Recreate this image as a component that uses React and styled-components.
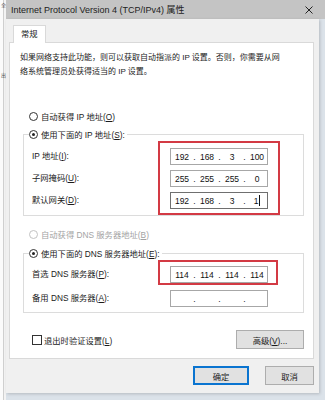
import React from 'react'
import styled, { createGlobalStyle } from 'styled-components'

const GlobalStyle = createGlobalStyle`
  html, body {
    margin: 0;
    padding: 0;
  }
  body {
    width: 325px;
    height: 400px;
    overflow: hidden;
    background: #dbe2e9;
    font-family: "Liberation Sans", "Noto Sans CJK SC", sans-serif;
    color: #1b1b1b;
    text-autospace: no-autospace;
  }
`

const Screen = styled.div`
  display: flex;
  width: 325px;
  height: 400px;
  overflow: hidden;
`

// window behind the dialog, only a sliver of it is visible
const BehindWindow = styled.div`
  width: 6px;
  flex-shrink: 0;
  display: flex;
  flex-direction: column;
  align-items: flex-end;
  background: linear-gradient(to right, #fbfbfb 0 3px, #cfcfcf 3px 4px, #f3f3f3 4px);
  font-size: 5px;
  color: #555;
`

const Glyph = styled.span`
  margin-top: ${p => p.top}px;
  line-height: 6px;
`

const Main = styled.div`
  flex: 1;
  display: flex;
  flex-direction: column;
`

const TitleBar = styled.div`
  height: 19px;
  flex-shrink: 0;
  display: flex;
  align-items: center;
  justify-content: space-between;
  padding: 0 12px 0 5px;
  background: #c4c4c4;
  font-size: 9px;
  color: #222;
`

const Window = styled.div`
  width: 313px;
  height: 374px;
  box-sizing: border-box;
  display: flex;
  flex-direction: column;
  padding: 6px 5px 0 3px;
  background: #f0f0f0;
  box-shadow: 1px 1px 3px rgba(0, 0, 0, 0.18);
  font-size: 8.3px;
`

const Tabs = styled.div`
  display: flex;
`

const Tab = styled.div`
  margin-left: 4px;
  height: 17px;
  line-height: 17px;
  padding: 0 7px;
  background: #fff;
  border: 1px solid #d9d9d9;
  border-bottom: none;
  position: relative;
  z-index: 1;
`

const Panel = styled.div`
  display: flex;
  flex-direction: column;
  margin-top: -1px;
  background: #fff;
  border: 1px solid #d9d9d9;
  padding: 8px 9px 9px 10px;
`

const Intro = styled.p`
  margin: 0;
  line-height: 14px;
  font-size: 8px;
  white-space: nowrap;
`

const OptionRow = styled.label`
  display: flex;
  align-items: center;
  gap: 3px;
  height: 14px;
  margin: ${p => p.mt}px 0 0 ${p => p.ml}px;
  color: ${p => (p.disabled ? '#a3a3a3' : '#1b1b1b')};
`

const Radio = styled.span`
  width: 7px;
  height: 7px;
  border-radius: 50%;
  border: 1px solid ${p => (p.disabled ? '#c2c2c2' : '#333')};
  background: #fff;
  display: flex;
  align-items: center;
  justify-content: center;

  &::after {
    content: '';
    width: 3px;
    height: 3px;
    border-radius: 50%;
    background: ${p => (p.checked ? '#222' : 'transparent')};
  }
`

const Group = styled.fieldset`
  margin: ${p => p.mt}px 0 0 3px;
  padding: 0 0 ${p => p.pb}px 0;
  border: 1px solid #dcdcdc;
  min-width: 0;
`

const Legend = styled.legend`
  margin-left: 5px;
  padding: 0 2px 0 0;
`

const GroupBody = styled.div`
  display: flex;
  padding-left: 8px;
`

const LabelCol = styled.div`
  flex: 1;
  display: flex;
  flex-direction: column;
  padding-top: ${p => p.pt}px;
  gap: ${p => p.gap}px;
`

const FieldLabel = styled.div`
  height: 17px;
  line-height: 17px;
`

const FieldCol = styled.div`
  display: flex;
  flex-direction: column;
  margin-right: ${p => p.mr}px;
`

const Highlight = styled.div`
  display: flex;
  flex-direction: column;
  gap: 5px;
  border: 2px solid #d33a44;
  padding: ${p => p.pad};
`

const LooseField = styled.div`
  padding-left: 12px;
  margin-top: 5px;
`

const IpBox = styled.div`
  width: 98px;
  height: 17px;
  box-sizing: border-box;
  display: flex;
  align-items: center;
  padding-left: 1px;
  border: 1px solid ${p => (p.focused ? '#6f6f6f' : '#a7a7a7')};
  background: #fff;
  font-family: "Liberation Sans", sans-serif;
  font-size: 8.5px;
  color: #111;
`

const Octet = styled.span`
  width: 20px;
  display: flex;
  justify-content: center;
  align-items: center;
`

const Dot = styled.span`
  width: 5px;
  text-align: center;
`

const Caret = styled.span`
  width: 1px;
  height: 11px;
  margin-left: 1px;
  background: #111;
`

const PanelFooter = styled.div`
  display: flex;
  align-items: center;
  justify-content: space-between;
  margin-top: 17px;
  padding-left: 12px;
`

const CheckRow = styled.label`
  display: flex;
  align-items: center;
  gap: 2px;
`

const Checkbox = styled.span`
  width: 8px;
  height: 8px;
  border: 1px solid #333;
  background: #fff;
`

const Button = styled.button`
  width: ${p => p.w}px;
  height: 19px;
  padding: 0;
  box-sizing: border-box;
  font-family: "Liberation Sans", "Noto Sans CJK SC", sans-serif;
  font-size: 8.3px;
  color: #1b1b1b;
  background: #e1e1e1;
  border: 1px solid ${p => (p.primary ? '#0a74d0' : '#adadad')};
  box-shadow: ${p => (p.primary ? 'inset 0 0 0 1px #0a74d0' : 'none')};
  text-autospace: no-autospace;
`

const DialogButtons = styled.div`
  display: flex;
  justify-content: flex-end;
  gap: 16px;
  padding-top: 7px;
`

const CloseIcon = () => (
  <svg width="8" height="8" viewBox="0 0 8 8">
    <path d="M0.5 0.5L7.5 7.5M7.5 0.5L0.5 7.5" stroke="#222" strokeWidth="1" />
  </svg>
)

const IpField = ({ parts = ['', '', '', ''], caret, focused }) => (
  <IpBox focused={focused}>
    {parts.map((p, i) => (
      <React.Fragment key={i}>
        {i > 0 && <Dot>.</Dot>}
        <Octet>
          {p}
          {caret && i === 3 && <Caret />}
        </Octet>
      </React.Fragment>
    ))}
  </IpBox>
)

const Option = ({ checked, disabled, mt = 0, ml = 9, children }) => (
  <OptionRow disabled={disabled} mt={mt} ml={ml}>
    <Radio checked={checked} disabled={disabled} />
    <span>{children}</span>
  </OptionRow>
)

export default function App() {
  return (
    <>
      <GlobalStyle />
      <Screen>
        <BehindWindow>
          <Glyph top={2}>全</Glyph>
          <Glyph top={64}>出</Glyph>
        </BehindWindow>
        <Main>
          <TitleBar>
            <span>Internet Protocol Version 4 (TCP/IPv4) 属性</span>
            <CloseIcon />
          </TitleBar>
          <Window>
            <Tabs>
              <Tab>常规</Tab>
            </Tabs>
            <Panel>
              <Intro>
                如果网络支持此功能，则可以获取自动指派的 IP 设置。否则，你需要从网
                <br />
                络系统管理员处获得适当的 IP 设置。
              </Intro>

              <Option mt={30}>自动获得 IP 地址(<u>O</u>)</Option>
              <Group mt={4} pb={0}>
                <Legend>
                  <Option checked ml={0}>使用下面的 IP 地址(<u>S</u>):</Option>
                </Legend>
                <GroupBody>
                  <LabelCol pt={7} gap={5}>
                    <FieldLabel>IP 地址(<u>I</u>):</FieldLabel>
                    <FieldLabel>子网掩码(<u>U</u>):</FieldLabel>
                    <FieldLabel>默认网关(<u>D</u>):</FieldLabel>
                  </LabelCol>
                  <FieldCol mr={23}>
                    <Highlight pad="5px 10px 4px 10px">
                      <IpField parts={['192', '168', '3', '100']} />
                      <IpField parts={['255', '255', '255', '0']} />
                      <IpField parts={['192', '168', '3', '1']} caret focused />
                    </Highlight>
                  </FieldCol>
                </GroupBody>
              </Group>

              <Option disabled mt={11}>自动获得 DNS 服务器地址(<u>B</u>)</Option>
              <Group mt={5} pb={5}>
                <Legend>
                  <Option checked ml={0}>使用下面的 DNS 服务器地址(<u>E</u>):</Option>
                </Legend>
                <GroupBody>
                  <LabelCol pt={6} gap={7}>
                    <FieldLabel>首选 DNS 服务器(<u>P</u>):</FieldLabel>
                    <FieldLabel>备用 DNS 服务器(<u>A</u>):</FieldLabel>
                  </LabelCol>
                  <FieldCol mr={25}>
                    <Highlight pad="4px 8px 0 10px">
                      <IpField parts={['114', '114', '114', '114']} />
                    </Highlight>
                    <LooseField>
                      <IpField />
                    </LooseField>
                  </FieldCol>
                </GroupBody>
              </Group>

              <PanelFooter>
                <CheckRow>
                  <Checkbox />
                  <span>退出时验证设置(<u>L</u>)</span>
                </CheckRow>
                <Button w={68}>高级(<u>V</u>)...</Button>
              </PanelFooter>
            </Panel>
            <DialogButtons>
              <Button w={56} primary>确定</Button>
              <Button w={49}>取消</Button>
            </DialogButtons>
          </Window>
        </Main>
      </Screen>
    </>
  )
}
